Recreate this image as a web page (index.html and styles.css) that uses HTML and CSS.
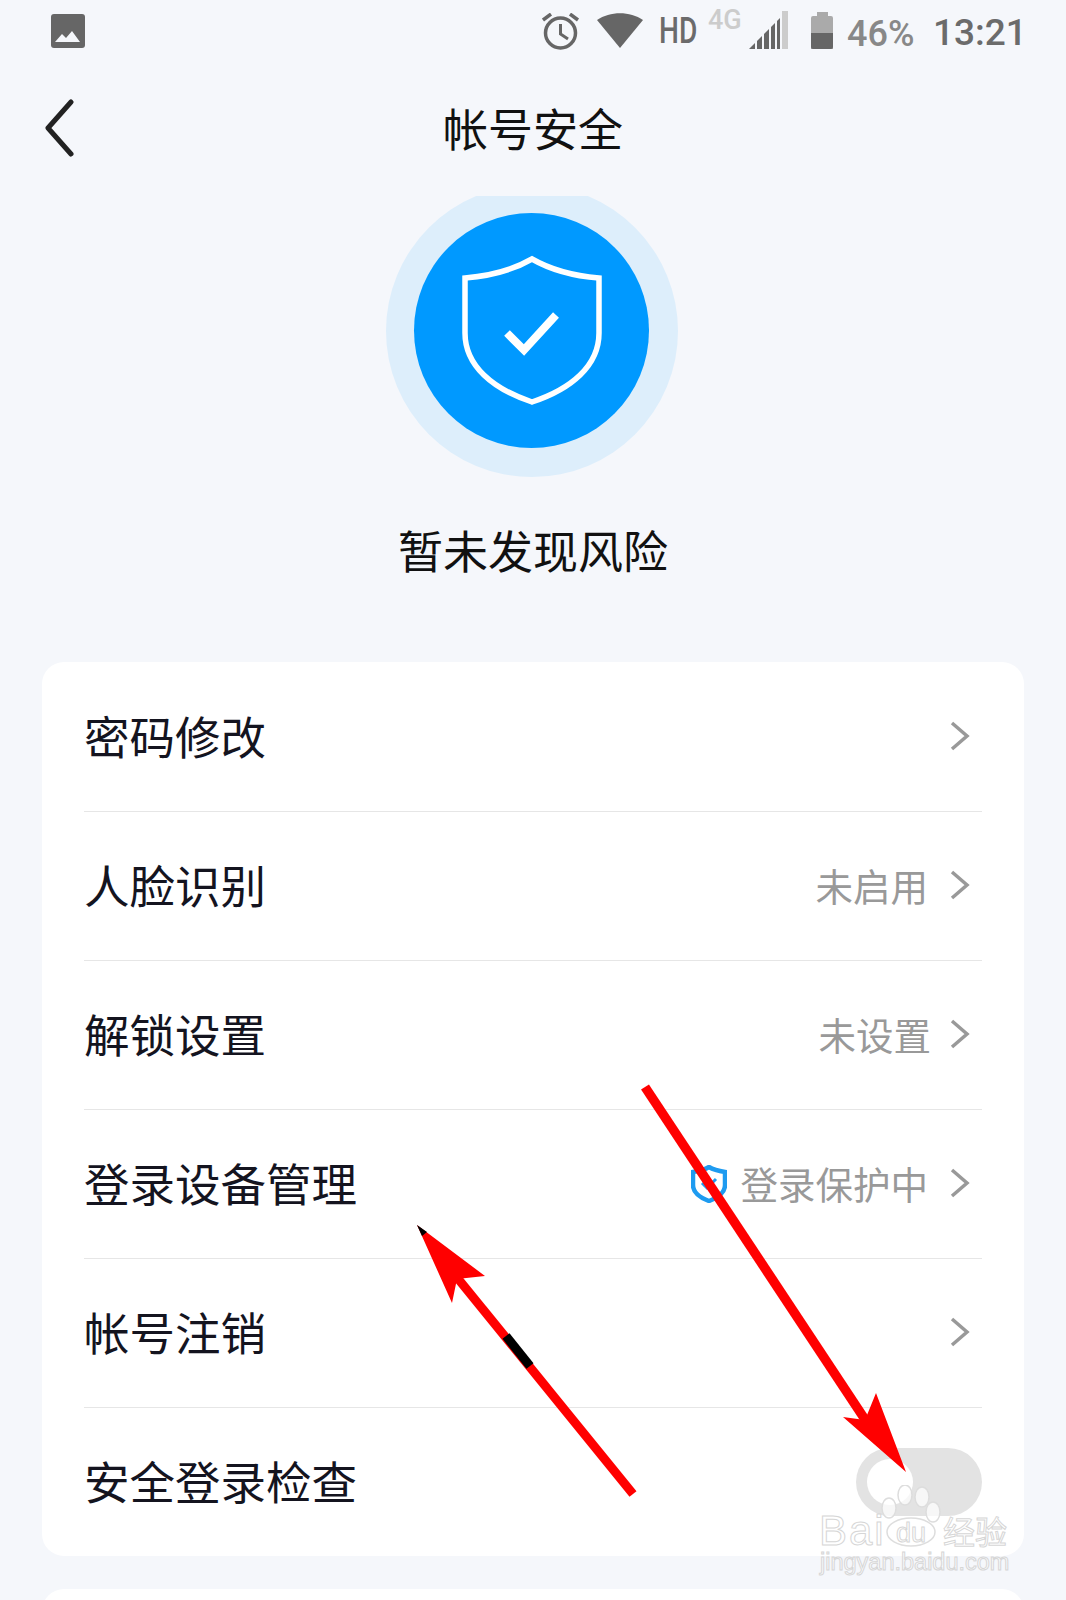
FILE: index.html
```html
<!DOCTYPE html>
<html lang="zh-CN">
<head>
    <meta charset="UTF-8">
    <meta name="viewport" content="width=device-width, initial-scale=1.0">
    <title>帐号安全</title>
    <link rel="stylesheet" href="styles.css">
</head>
<body>
<div class="page">

    <!-- Barra de estado -->
    <div class="status-bar">
        <svg class="ico-photo" width="34" height="34" viewBox="0 0 34 34"><rect width="34" height="34" rx="3" fill="#666"/><path d="M4 28 L11 20 L15 24 L21 17 L29 28 Z" fill="#f5f7fb"/></svg>
        <div class="status-right">
            <svg class="ico-alarm" width="38" height="38" viewBox="0 0 38 38" fill="none" stroke="#666"><circle cx="18.5" cy="20" r="15" stroke-width="3.5"/><path d="M18.5 11 V21 L26 26" stroke-width="3"/><path d="M1 7 L9 1 M36 7 L28 1" stroke-width="3.5"/></svg>
            <svg class="ico-wifi" width="46" height="35" viewBox="0 0 46 35"><path d="M0 7 C13 -2 33 -2 46 7 L23 35 Z" fill="#666"/></svg>
            <span class="st-hd">HD</span>
            <span class="st-4g">4G</span>
            <svg class="ico-signal" width="39" height="38" viewBox="0 0 39 38"><path d="M0 38 L31 7 V38 Z" fill="#666"/><path d="M33 0 H39 V38 H33 Z" fill="#ccc"/><path d="M7 30 V38 M14 23 V38 M21 16 V38 M27 9 V38" stroke="#f5f7fb" stroke-width="2"/></svg>
            <svg class="ico-battery" width="22" height="37" viewBox="0 0 22 37"><path d="M6 0 H17 V4 H20 Q22 4 22 6 V37 H0 V6 Q0 4 2 4 H6 Z" fill="#aaa"/><path d="M0 21 H22 V35 Q22 37 20 37 H2 Q0 37 0 35 Z" fill="#666"/></svg>
            <span class="st-pct">46%</span>
            <span class="st-time">13:21</span>
        </div>
    </div>

    <!-- Cabecalho -->
    <div class="header">
        <svg class="back" width="30" height="58" viewBox="0 0 30 58" fill="none" stroke="#222" stroke-width="5" stroke-linecap="round" stroke-linejoin="round"><path d="M26 3 L3 29 L26 55"/></svg>
        <h1>帐号安全</h1>
    </div>

    <!-- Estado da seguranca -->
    <div class="hero">
        <div class="halo-clip">
            <div class="halo">
                <div class="disc">
                    <svg width="142" height="152" viewBox="0 0 142 152" fill="none" stroke="#fff" stroke-width="5.5"><path d="M71 4 C52 15 28 21 4 23 V78 C4 111 32 134 71 147 C110 134 138 111 138 78 V23 C114 21 90 15 71 4 Z"/><path d="M46 78 L63 95 L95 60" stroke-width="8"/></svg>
                </div>
            </div>
        </div>
        <p class="hero-text">暂未发现风险</p>
    </div>

    <!-- Lista de opcoes -->
    <div class="card">
        <div class="row">
            <span class="label">密码修改</span>
            <svg class="chev" width="20" height="30" viewBox="0 0 20 30" fill="none" stroke="#999" stroke-width="3.5"><path d="M2 2 L17 15 L2 28"/></svg>
        </div>
        <div class="row">
            <span class="label">人脸识别</span>
            <span class="value">未启用</span>
            <svg class="chev" width="20" height="30" viewBox="0 0 20 30" fill="none" stroke="#999" stroke-width="3.5"><path d="M2 2 L17 15 L2 28"/></svg>
        </div>
        <div class="row">
            <span class="label">解锁设置</span>
            <span class="value value-near">未设置</span>
            <svg class="chev" width="20" height="30" viewBox="0 0 20 30" fill="none" stroke="#999" stroke-width="3.5"><path d="M2 2 L17 15 L2 28"/></svg>
        </div>
        <div class="row">
            <span class="label">登录设备管理</span>
            <svg class="mini-shield" width="36" height="38" viewBox="0 0 36 38" fill="none" stroke="#1e9bf0" stroke-width="4.5"><path d="M18 2 C13 5 8 6 2 7 V20 C2 28 10 33 18 36 C26 33 34 28 34 20 V7 C28 6 23 5 18 2 Z"/><path d="M11 18 L16 23 L25 14" stroke-width="3"/></svg>
            <span class="value">登录保护中</span>
            <svg class="chev" width="20" height="30" viewBox="0 0 20 30" fill="none" stroke="#999" stroke-width="3.5"><path d="M2 2 L17 15 L2 28"/></svg>
        </div>
        <div class="row">
            <span class="label">帐号注销</span>
            <svg class="chev" width="20" height="30" viewBox="0 0 20 30" fill="none" stroke="#999" stroke-width="3.5"><path d="M2 2 L17 15 L2 28"/></svg>
        </div>
        <div class="row">
            <span class="label">安全登录检查</span>
            <div class="toggle"><div class="knob"></div></div>
        </div>
    </div>

    <div class="card-next"></div>

    <!-- Setas desenhadas por cima da captura -->
    <svg class="arrows" width="1066" height="1600" viewBox="0 0 1066 1600">
        <path d="M645 1087 L866 1421" stroke="#f00" stroke-width="9.5" fill="none"/>
        <path d="M906 1472 L843 1417 L865 1420 L876 1393 Z" fill="#f00"/>
        <path d="M633 1494 L455 1275" stroke="#f00" stroke-width="9" fill="none"/>
        <path d="M506 1336 L530 1366" stroke="#000" stroke-width="9" fill="none"/>
        <path d="M417 1225 L485 1276 L457 1279 L452 1303 Z" fill="#f00"/>
        <path d="M417 1225 L427 1232 L422 1236 Z" fill="#000"/>
    </svg>

    <!-- Marca de agua -->
    <div class="watermark">
        <svg class="paw" width="62" height="66" viewBox="0 0 62 66" fill="#fff" fill-opacity="0.72" stroke="#ddd" stroke-width="1.5"><ellipse cx="9" cy="23" rx="7" ry="10"/><ellipse cx="25" cy="10" rx="7" ry="10"/><ellipse cx="42" cy="12" rx="7" ry="10"/><ellipse cx="53" cy="27" rx="7" ry="10"/><ellipse cx="31" cy="47" rx="24" ry="14"/></svg>
        <span class="wm-bai">Bai</span>
        <span class="wm-du">du</span>
        <span class="wm-cn">经验</span>
        <span class="wm-url">jingyan.baidu.com</span>
    </div>

</div>
</body>
</html>
```

FILE: styles.css
```css
* {
    box-sizing: border-box;
}

body {
    margin: 0;
    padding: 0;
    background-color: #f5f7fb;
    font-family: "Noto Sans CJK SC", "Liberation Sans", sans-serif;
}

.page {
    position: relative;
    width: 1066px;
    height: 1600px;
    overflow: hidden;
}

.status-bar {
    height: 62px;
    padding: 14px 44px 0 51px;
    display: flex;
    justify-content: space-between;
    align-items: flex-start;
}

.status-right {
    display: flex;
    align-items: flex-start;
    color: #6b6b6b;
    font-family: Roboto, "Liberation Sans", sans-serif;
    font-weight: 500;
    white-space: nowrap;
}

.ico-alarm {
    margin: -1px 17px 0 0;
}

.ico-wifi {
    margin: -1px 16px 0 0;
}

.st-hd {
    font-size: 36px;
    line-height: 36px;
    width: 40px;
    margin: -1px 9px 0 0;
    transform: scaleX(0.78);
    transform-origin: left;
}

.st-4g {
    font-size: 27px;
    line-height: 26px;
    color: #ccc;
    width: 33px;
    margin: -7px 8px 0 0;
}

.ico-signal {
    margin: -3px 23px 0 0;
}

.ico-battery {
    margin: -2px 14px 0 0;
}

.st-pct {
    font-size: 36px;
    line-height: 36px;
    color: #888;
    width: 67px;
    margin: 2px 19px 0 0;
}

.st-time {
    font-size: 37px;
    line-height: 36px;
    width: 89px;
    margin-top: 1px;
}

.header {
    height: 134px;
    padding-bottom: 2px;
    display: flex;
    align-items: center;
    justify-content: center;
    position: relative;
}

.back {
    position: absolute;
    left: 45px;
    top: 37px;
}

h1 {
    margin: 0;
    font-size: 45px;
    font-weight: 400;
    line-height: 60px;
    color: #111;
}

.hero {
    display: flex;
    flex-direction: column;
    align-items: center;
}

.halo-clip {
    height: 281px;
    width: 292px;
    margin-right: 2px;
    overflow: hidden;
}

.halo {
    width: 292px;
    height: 292px;
    margin-top: -11px;
    border-radius: 50%;
    background-color: #ddeefb;
    display: flex;
    align-items: center;
    justify-content: center;
}

.disc {
    width: 235px;
    height: 235px;
    margin: 0 1px 1px 0;
    border-radius: 50%;
    background-color: #0099ff;
    display: flex;
    align-items: center;
    justify-content: center;
}

.hero-text {
    margin: 43px 0 0 0;
    font-size: 45px;
    line-height: 60px;
    color: #111;
}

.card {
    margin: 82px 42px 0 42px;
    height: 894px;
    background-color: #fff;
    border-radius: 22px;
    padding: 1px 42px 0 42px;
}

.row {
    height: 149px;
    display: flex;
    align-items: center;
    border-bottom: 1px solid #e6e6e6;
}

.row:last-child {
    height: 148px;
    border-bottom: none;
}

.label {
    font-size: 45.5px;
    line-height: 60px;
    margin: 0 auto 5px 0;
    color: #14141f;
}

.value {
    font-size: 37.5px;
    line-height: 50px;
    margin-bottom: 3px;
    color: #999;
}

.value-near {
    margin-right: -3px;
}

.chev {
    margin: 0 12px 3px 22px;
}

.mini-shield {
    margin: 0 14px 0 0;
}

.toggle {
    width: 126px;
    height: 68px;
    background-color: #e3e3e3;
    border-radius: 34px;
    padding: 11px;
}

.knob {
    width: 46px;
    height: 46px;
    background-color: #fff;
    border-radius: 50%;
}

.card-next {
    margin: 33px 42px 0 42px;
    height: 60px;
    background-color: #fff;
    border-radius: 22px;
}

.arrows {
    position: absolute;
    left: 0;
    top: 0;
}

.watermark {
    position: absolute;
    left: 816px;
    top: 1485px;
    width: 200px;
    height: 95px;
    font-family: "Liberation Sans", sans-serif;
    color: rgba(255, 255, 255, 0.72);
    -webkit-text-stroke: 1px #d6d6d6;
    white-space: nowrap;
}

.paw {
    position: absolute;
    left: 64px;
    top: 0;
}

.wm-bai {
    position: absolute;
    left: 3px;
    top: 27px;
    font-size: 42px;
    line-height: 38px;
    letter-spacing: 2px;
}

.wm-du {
    position: absolute;
    left: 80px;
    top: 35px;
    font-size: 27px;
    line-height: 26px;
}

.wm-cn {
    position: absolute;
    left: 127px;
    top: 29px;
    font-family: "Noto Sans CJK SC", sans-serif;
    font-size: 32px;
    line-height: 32px;
}

.wm-url {
    position: absolute;
    left: 4px;
    top: 65px;
    font-size: 23.5px;
    line-height: 24px;
}
```
